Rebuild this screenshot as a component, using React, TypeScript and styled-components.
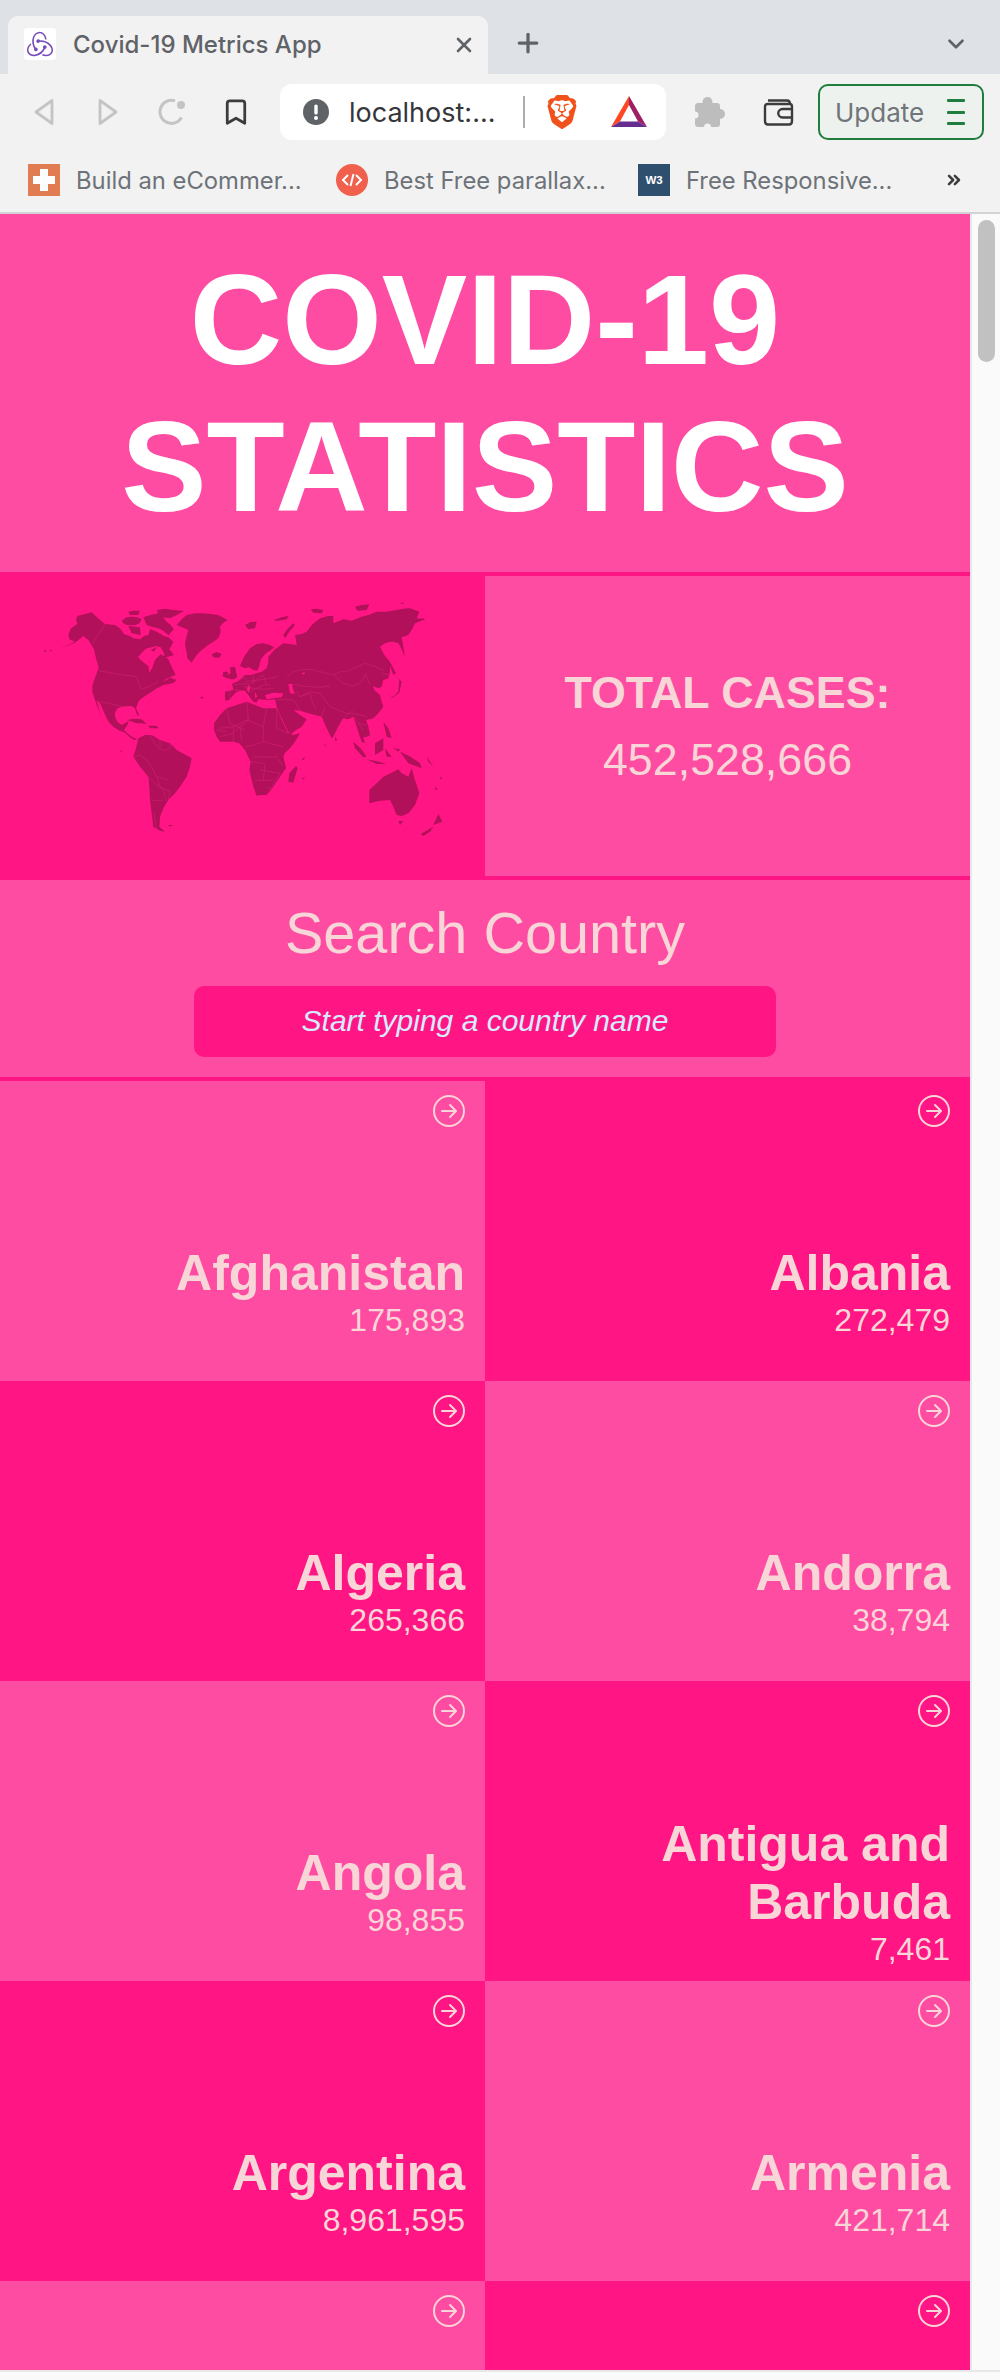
import React from 'react';
import styled, { createGlobalStyle } from 'styled-components';
import { BsArrowRightCircle } from 'react-icons/bs';
import { SiRedux, SiBrave } from 'react-icons/si';
import { Bookmark, X, Plus, ChevronDown, ChevronsRight } from 'lucide-react';

const LIGHT = '#ff4ca3';
const DARK = '#ff1583';
const INK = '#f8d5d6';
const SANS = '"Liberation Sans", Arial, sans-serif';
const UI = 'Inter, "Noto Sans", sans-serif';

const Global = createGlobalStyle`
  html, body { margin: 0; padding: 0; overflow: hidden; background: #fafafa; }
  * { box-sizing: border-box; }
`;

const Frame = styled.div`
  width: 1000px;
  height: 2380px;
  overflow: hidden;
  display: flex;
  flex-direction: column;
  background: #fafafa;
`;
const TabStrip = styled.div`
  height: 74px;
  background: #dee1e6;
  padding: 16px 0 0 8px;
  display: flex;
  align-items: stretch;
  color: #5f6368;
`;
const Tab = styled.div`
  width: 480px;
  background: #f2f2f2;
  border-radius: 10px 10px 0 0;
  display: flex;
  align-items: center;
  padding: 0 12px 0 16px;
`;
const Favicon = styled.span`
  width: 32px;
  height: 32px;
  background: #fff;
  border-radius: 3px;
  display: flex;
  align-items: center;
  justify-content: center;
  color: #764abc;
  margin-top: -2px;
`;
const TabTitle = styled.span`
  flex: 1;
  margin-left: 17px;
  font: 500 24px ${UI};
  color: #5f6368;
  margin-top: -2px;
`;
const NewTab = styled.span`
  display: flex;
  margin: -2px 0 0 25px;
  height: 58px;
  align-items: center;
`;
const StripEnd = styled.span`
  display: flex;
  margin: -2px 0 0 auto;
  padding-right: 31px;
  align-items: center;
`;
const Toolbar = styled.div`
  height: 72px;
  background: #f2f2f2;
  display: flex;
  align-items: flex-start;
  padding: 10px 0 0 12px;
`;
const NavButton = styled.span`
  width: 64px;
  height: 56px;
  display: flex;
  align-items: center;
  justify-content: center;
  color: #3c3c3c;
`;
const Address = styled.div`
  width: 386px;
  height: 56px;
  margin-left: 12px;
  margin-right: 10px;
  background: #fff;
  border-radius: 12px;
  display: flex;
  align-items: center;
  padding-left: 23px;
`;
const Host = styled.span`
  margin-left: 20px;
  font: 400 27px ${UI};
  color: #35363a;
  width: 174px;
  white-space: nowrap;
`;
const Divider = styled.span`
  width: 2px;
  height: 32px;
  background: #adadad;
`;
const Brave = styled.span`
  display: flex;
  margin-left: 20px;
  color: #f1511b;
`;
const Bat = styled.span`
  display: flex;
  margin-left: 32px;
`;
const ToolIcon = styled.span`
  width: 68px;
  height: 56px;
  display: flex;
  align-items: center;
  justify-content: center;
`;
const UpdateButton = styled.div`
  width: 166px;
  height: 56px;
  margin-left: 6px;
  border: 2px solid #1f7e3d;
  border-radius: 10px;
  background: #edf2ee;
  display: flex;
  align-items: center;
  justify-content: space-between;
  padding: 0 17px 0 15px;
  font: 400 26px ${UI};
  color: #70757a;
`;
const MenuLines = styled.span`
  width: 18px;
  height: 26px;
  display: flex;
  flex-direction: column;
  justify-content: space-between;
  & > i {
    display: block;
    height: 3px;
    background: #1f7e3d;
    border-radius: 1px;
  }
`;
const Bookmarks = styled.div`
  height: 68px;
  background: #f2f2f2;
  border-bottom: 2px solid #d2d3d5;
  display: flex;
  align-items: flex-start;
  padding: 18px 0 0 28px;
`;
const BookmarkItem = styled.div<{ $w: number }>`
  width: ${p => p.$w}px;
  height: 32px;
  display: flex;
  align-items: center;
  gap: 16px;
  font: 400 23.8px ${UI};
  color: #6d7378;
  white-space: nowrap;
`;
const Overflow = styled.span`
  display: flex;
  margin-left: 43px;
  height: 32px;
  align-items: center;
  color: #3c3c3c;
`;
const MarkIcon = styled.span<{ $bg: string; $round?: boolean }>`
  width: 32px;
  height: 32px;
  flex: none;
  background: ${p => p.$bg};
  border-radius: ${p => (p.$round ? '50%' : '0')};
  display: flex;
  align-items: center;
  justify-content: center;
  color: #fff;
  font: 700 11.5px ${SANS};
`;

const Viewport = styled.div`
  display: flex;
  height: 2158px;
  border-bottom: 2px solid #e8e8e8;
`;
const Page = styled.main`
  width: 970px;
  height: 2156px;
  overflow: hidden;
  background: ${DARK};
  font-family: ${SANS};
  color: ${INK};
`;
const Gutter = styled.div`
  width: 30px;
  border-left: 2px solid #e8e8e8;
  background: #fafafa;
  padding: 6px 0 0 6px;
`;
const Thumb = styled.div`
  width: 17px;
  height: 142px;
  border-radius: 9px;
  background: #c1c1c1;
`;
const Header = styled.header`
  background: ${LIGHT};
  border-bottom: 4px solid ${DARK};
  padding: 32px 60px;
`;
const Title = styled.h1`
  margin: 0;
  font: 700 128px/147px ${SANS};
  color: #fff;
  text-align: center;
`;
const Hero = styled.section`
  display: grid;
  grid-template-columns: 485px 485px;
  height: 304px;
  background: ${DARK};
`;
const MapBox = styled.div`
  display: flex;
  & > svg { display: block; width: 485px; height: 304px; }
`;
const Stats = styled.div`
  height: 300px;
  background: ${LIGHT};
  display: flex;
  flex-direction: column;
  align-items: center;
  justify-content: center;
  gap: 16px;
  font-size: 44.8px;
`;
const StatsLabel = styled.h2`
  margin: 0;
  font: 700 44.8px ${SANS};
`;
const StatsValue = styled.span``;
const Search = styled.section`
  background: ${LIGHT};
  border-bottom: 4px solid ${DARK};
  padding: 20px 0;
  display: flex;
  flex-direction: column;
  align-items: center;
  gap: 20px;
  height: 201px;
`;
const SearchTitle = styled.h2`
  margin: 0;
  font: 400 57.6px ${SANS};
`;
const SearchInput = styled.input`
  width: 582px;
  height: 71px;
  border: 0;
  border-radius: 10px;
  background: ${DARK};
  text-align: center;
  font: italic 400 30px ${SANS};
  color: #d5ebff;
  padding-bottom: 3px;
  &::placeholder { color: #d5ebff; opacity: 1; }
`;
const Grid = styled.section`
  display: grid;
  grid-template-columns: 485px 485px;
  grid-auto-rows: 300px;
`;
const Tile = styled.article<{ $dark: boolean }>`
  background: ${p => (p.$dark ? DARK : LIGHT)};
  display: grid;
  grid-template-rows: 120px 1fr;
  padding: 0 20px;
`;
const TileTop = styled.div`
  display: flex;
  justify-content: flex-end;
  padding-top: 14px;
  color: ${INK};
`;
const TileBody = styled.div`
  display: flex;
  flex-direction: column;
  justify-content: center;
  align-items: flex-end;
  text-align: right;
`;
const Name = styled.h3`
  margin: 0;
  font: 700 50px ${SANS};
`;
const Count = styled.span`
  font-size: 32px;
`;

const tiles: { name?: string; count?: string }[] = [
  { name: 'Afghanistan', count: '175,893' },
  { name: 'Albania', count: '272,479' },
  { name: 'Algeria', count: '265,366' },
  { name: 'Andorra', count: '38,794' },
  { name: 'Angola', count: '98,855' },
  { name: 'Antigua and Barbuda', count: '7,461' },
  { name: 'Argentina', count: '8,961,595' },
  { name: 'Armenia', count: '421,714' },
  {},
  {},
];

const LAND = [
  // North America
  'M130,272L138,271 140,275 132,275ZM146,272L155,270 155,274ZM160,270L180,264 205,255 225,245 208,238 205,225 213,205 232,192 228,178 232,168 275,157 300,180 315,192 345,195 360,205 372,222 390,228 400,235 420,238 432,228 445,225 458,232 470,238 478,222 492,228 505,232 520,245 514,258 508,268 522,285 505,290 495,292 490,275 482,262 468,258 455,262 440,265 428,275 414,292 428,305 445,318 448,340 458,320 465,300 474,290 482,283 497,290 505,298 515,320 527,345 512,350 500,356 490,362 510,360 530,358 522,368 505,372 490,375 478,382 470,385 455,395 440,405 425,415 415,425 408,445 415,458 417,470 410,462 405,445 395,438 385,438 368,440 352,445 345,458 345,470 352,485 365,495 375,490 387,482 382,495 372,510 385,522 395,530 412,538 402,540 388,530 375,518 355,510 340,500 328,488 320,475 310,452 300,430 290,420 296,445 303,465 292,440 285,420 277,395 277,378 284,355 290,340 296,322 288,295 282,268 265,240 250,228 238,238 225,248 200,258Z',
  // Arctic islands, Caribbean
  'M365,182L380,172 395,170 412,172 425,178 418,190 405,196 380,195 370,190ZM385,198L405,200 420,202 422,226 408,222 395,220ZM430,172L452,165 475,160 490,172 500,185 512,195 522,207 505,226 490,212 475,205 455,200 440,195ZM385,155L402,152 420,152 415,165 390,165ZM470,150L495,146 520,150 552,153 530,165 510,175 480,170ZM450,207L470,215 488,225 470,240 445,226ZM452,270L470,262 462,275ZM383,480L400,476 425,478 440,492 422,490 410,490ZM445,497L470,497 476,505 450,505ZM490,370L510,352 528,362 505,372ZM600,410L612,412 605,416ZM360,572L368,572 364,576Z',
  // Greenland
  'M530,195L545,178 560,165 585,160 610,160 632,162 655,165 683,180 668,190 660,200 662,215 655,235 640,245 625,255 605,270 590,285 575,308 562,295 560,280 555,250 560,228 565,210Z',
  'M635,283L650,276 665,282 660,290 655,294 640,292Z',
  // Polar islands
  'M735,195L752,186 770,185 765,205 745,208ZM822,180L845,172 865,168 860,178 830,183ZM932,148L950,146 970,150 965,160 940,158ZM1065,140L1085,135 1108,133 1100,150 1072,152ZM1200,128L1212,128 1208,133ZM1262,175L1275,176 1270,180Z',
  // British Isles
  'M690,322L705,320 708,335 712,350 703,358 695,358 672,352 692,340ZM670,335L685,335 682,350 668,350Z',
  // Scandinavia
  'M720,318L732,290 750,265 770,252 790,250 808,254 822,262 810,272 800,278 790,288 782,300 778,318 772,332 760,330 748,322 735,325Z',
  // Eurasia
  'M675,395L688,392 700,390 698,378 695,372 708,366 720,360 728,352 735,345 752,345 770,340 785,335 800,325 805,305 805,290 825,268 850,250 870,252 890,255 888,240 885,225 905,222 920,215 938,192 960,175 985,168 1000,168 1000,190 1030,178 1055,182 1080,172 1105,165 1130,155 1160,155 1190,150 1210,146 1230,145 1258,155 1250,175 1275,178 1245,190 1238,205 1225,225 1205,232 1210,260 1215,290 1205,268 1195,250 1182,246 1170,245 1155,250 1140,260 1150,280 1160,295 1170,310 1170,335 1165,355 1150,360 1145,380 1135,385 1118,378 1125,392 1140,405 1145,425 1150,440 1135,460 1120,475 1098,480 1105,500 1110,525 1098,532 1090,530 1095,550 1085,545 1075,515 1070,500 1060,470 1045,478 1030,475 1015,500 1000,530 995,535 980,505 965,470 945,465 925,460 900,452 880,450 900,465 920,478 905,500 885,512 870,525 855,495 840,465 830,440 825,418 800,420 775,418 770,428 760,425 752,415 745,405 735,392 722,392 710,395 700,405 690,418 680,422 675,420Z',
  // Africa
  'M642,490L660,465 680,445 710,435 740,425 765,435 790,445 810,445 830,445 845,480 865,520 880,525 900,520 885,545 870,565 855,578 850,590 858,625 840,650 820,680 808,695 800,705 785,705 770,707 760,680 748,630 752,605 735,570 718,550 700,545 680,545 660,545 650,530 642,510Z',
  'M888,618L893,625 885,650 880,668 865,665 868,640Z',
  'M905,598L915,590 912,600ZM905,655L917,652 910,658Z',
  // South America
  'M415,535L435,525 455,525 480,540 510,550 530,570 575,595 570,620 560,650 540,680 525,700 505,720 490,745 480,770 478,800 495,815 480,812 460,800 455,760 450,720 448,680 445,650 420,620 400,590 408,565Z',
  'M505,795L518,795 510,800Z',
  // Australia and NZ
  'M1108,690L1130,670 1150,650 1172,640 1195,628 1205,640 1225,650 1235,625 1245,660 1258,700 1245,735 1225,760 1205,768 1190,765 1180,740 1170,720 1140,722 1108,730ZM1195,783L1210,783 1200,795ZM1315,762L1327,785 1300,795ZM1262,822L1300,800 1290,815 1270,828Z',
  // SE Asia, Japan, islands
  'M1060,545L1082,565 1100,590 1090,592 1065,565ZM1125,550L1150,535 1150,570 1125,585ZM1100,598L1130,604 1160,612 1130,612ZM1200,575L1232,590 1260,610 1265,625 1225,610ZM1155,565L1175,590 1160,590ZM1150,485L1165,505 1175,535 1160,530ZM1168,415L1182,408 1195,395 1198,360 1185,345 1205,365 1198,398 1180,412ZM1160,290L1175,315 1188,340 1180,345ZM1005,530L1012,540 1005,543ZM855,235L870,212 885,195 880,190 862,208 850,225ZM1180,565L1200,568 1195,575ZM1280,590L1300,620 1285,605ZM1305,680L1315,690 1305,688ZM975,548L978,560 974,558ZM1320,650L1328,655 1322,658Z',
];
const WATER =
  'M795,405L820,398 850,400 845,412 820,415 800,418ZM865,372L878,372 878,385 885,402 870,400ZM905,340L915,335 912,345ZM745,375L752,382 746,398 740,388ZM765,395L772,410 765,415Z';
const BORDERS =
  'M315,192L278,250M296,332L350,342 410,350 425,388 450,378 475,365M300,425L325,430 345,435 375,440M860,352L880,335 900,330 930,328 960,335 1000,345 1020,335 1040,335 1095,310 1125,320 1150,330M1000,345L1030,370 1060,378 1085,365 1100,340M880,372L905,378 930,380 960,382 990,378M900,410L930,395 960,400 975,420 990,440 1015,450 1040,460 1070,462 1100,470M930,400L938,430 950,450M890,395L900,410 930,400M830,420L855,418 880,420 900,450M965,470L975,440M1000,530L1025,480 1030,475M1060,470L1075,490 1090,510M1030,475L1060,450M1075,490L1100,495M700,375L720,372 750,372 790,345M735,365L780,360 835,350M730,380L760,385 790,388 820,385M750,395L770,385 790,375 810,375M720,345L740,358M790,345L800,375M760,345L760,372M700,390L730,392M690,392L690,418M660,505L700,500 740,480 765,490 790,500 800,445M740,425L745,480 720,500 700,520 660,530M680,445L690,490 735,510M790,500L790,545 760,555 735,560M790,545L815,552 850,560M830,445L830,505 865,520M700,500L700,545M720,500L725,545M650,510L680,515M760,590L795,592 830,590 850,620M752,605L790,610M780,630L810,635 840,640 825,665 810,690M765,660L795,662 820,660M795,610L790,660M800,680L812,688M450,525L460,545 470,560 490,572 510,565M480,540L480,562M510,550L510,565M405,590L420,585 440,600 455,620 470,650 505,660M445,650L465,670 490,690 500,725M455,720L475,722 490,720M470,650L480,680 510,695 505,720M462,760L470,810M1145,340L1170,345M1120,478L1105,480M1095,345L1110,372';

const WorldMap = () => (
  <svg viewBox="0 48 1455 912" role="img" aria-label="World map">
    <g fill="#b2105b">
      {LAND.map((d, i) => (
        <path key={i} d={d} />
      ))}
    </g>
    <path d={WATER} fill={DARK} />
    <path d={BORDERS} fill="none" stroke="#d52674" strokeWidth="1.500" />
  </svg>
);

const BackIcon = ({ flip }: { flip?: boolean }) => (
  <svg width="20" height="28" viewBox="0 0 20 28" style={flip ? { transform: 'scaleX(-1)' } : undefined}>
    <path d="M18 2.500V25.500L2 14Z" fill="none" stroke="#c4c4c4" strokeWidth="2.800" strokeLinejoin="round" />
  </svg>
);
const ReloadIcon = () => (
  <svg width="28" height="28" viewBox="0 0 28 28">
    <path d="M23.500 19.500A11.500 11.500 0 1 1 17 2.900" fill="none" stroke="#c4c4c4" strokeWidth="3" />
    <circle cx="23" cy="7" r="4" fill="#c4c4c4" />
  </svg>
);
const AlertIcon = () => (
  <svg width="26" height="26" viewBox="0 0 26 26">
    <circle cx="13" cy="13" r="13" fill="#5f6368" />
    <rect x="11.300" y="5.500" width="3.400" height="10" rx="1.500" fill="#fff" />
    <circle cx="13" cy="19" r="2" fill="#fff" />
  </svg>
);
const BatIcon = () => (
  <svg width="36" height="33" viewBox="0 0 36 33">
    <path d="M18 0L0 31L9 25.500L18 9Z" fill="#ff4724" />
    <path d="M18 0V9L27 25.500L36 31Z" fill="#9e1f63" />
    <path d="M0 31L9 25.500H27L36 31Z" fill="#662d91" />
  </svg>
);
const PuzzleIcon = () => (
  <svg width="30" height="30" viewBox="0 0 30 30">
    <g fill="#bdbdbd">
      <rect x="0" y="6" width="25" height="24" rx="3" />
      <circle cx="12.500" cy="5" r="5" />
      <circle cx="25" cy="17" r="5" />
    </g>
    <circle cx="0" cy="18" r="3.500" fill="#f2f2f2" />
    <circle cx="12.500" cy="30" r="3.500" fill="#f2f2f2" />
  </svg>
);
const WalletIcon = () => (
  <svg width="31" height="27" viewBox="0 0 31 27">
    <path
      d="M5 1.500H24Q27 1.500 27 5H5Q2 5 2 8V22Q2 25.500 5 25.500H26Q29 25.500 29 22V8Q29 5 27 5M29 10H19.500A4 4 0 0 0 19.500 18.500H29"
      fill="none"
      stroke="#3c3c3c"
      strokeWidth="2.400"
    />
  </svg>
);
const CodeMark = () => (
  <svg width="22" height="16" viewBox="0 0 22 16">
    <path d="M7 3L2 8L7 13M15 3L20 8L15 13M12.500 2L9.500 14" fill="none" stroke="#fff" strokeWidth="2" />
  </svg>
);
const PlusMark = () => (
  <svg width="22" height="22" viewBox="0 0 22 22">
    <path d="M7 0H15V7H22V15H15V22H7V15H0V7H7Z" fill="#fff" />
  </svg>
);

export default function App() {
  return (
    <Frame>
      <Global />
      <TabStrip>
        <Tab>
          <Favicon>
            <SiRedux size={26} />
          </Favicon>
          <TabTitle>Covid-19 Metrics App</TabTitle>
          <X size={24} strokeWidth={2.6} color="#5f6368" />
        </Tab>
        <NewTab>
          <Plus size={30} strokeWidth={2.6} color="#5f6368" />
        </NewTab>
        <StripEnd>
          <ChevronDown size={26} strokeWidth={2.4} color="#5f6368" />
        </StripEnd>
      </TabStrip>
      <Toolbar>
        <NavButton>
          <BackIcon />
        </NavButton>
        <NavButton>
          <BackIcon flip />
        </NavButton>
        <NavButton>
          <ReloadIcon />
        </NavButton>
        <NavButton>
          <Bookmark size={30} strokeWidth={2.2} />
        </NavButton>
        <Address>
          <AlertIcon />
          <Host>localhost:...</Host>
          <Divider />
          <Brave>
            <SiBrave size={34} />
          </Brave>
          <Bat>
            <BatIcon />
          </Bat>
        </Address>
        <ToolIcon>
          <PuzzleIcon />
        </ToolIcon>
        <ToolIcon>
          <WalletIcon />
        </ToolIcon>
        <UpdateButton>
          Update
          <MenuLines>
            <i />
            <i />
            <i />
          </MenuLines>
        </UpdateButton>
      </Toolbar>
      <Bookmarks>
        <BookmarkItem $w={308}>
          <MarkIcon $bg="#e07b52">
            <PlusMark />
          </MarkIcon>
          Build an eCommer...
        </BookmarkItem>
        <BookmarkItem $w={302}>
          <MarkIcon $bg="#f0604d" $round>
            <CodeMark />
          </MarkIcon>
          Best Free parallax...
        </BookmarkItem>
        <BookmarkItem $w={263}>
          <MarkIcon $bg="#2f4f6f">W3</MarkIcon>
          Free Responsive...
        </BookmarkItem>
        <Overflow>
          <ChevronsRight size={20} strokeWidth={3} />
        </Overflow>
      </Bookmarks>
      <Viewport>
        <Page>
          <Header>
            <Title>COVID-19 STATISTICS</Title>
          </Header>
          <Hero>
            <MapBox>
              <WorldMap />
            </MapBox>
            <Stats>
              <StatsLabel>TOTAL CASES:</StatsLabel>
              <StatsValue>452,528,666</StatsValue>
            </Stats>
          </Hero>
          <Search>
            <SearchTitle>Search Country</SearchTitle>
            <SearchInput placeholder="Start typing a country name" />
          </Search>
          <Grid>
            {tiles.map((t, i) => (
              <Tile key={i} $dark={(Math.floor(i / 2) + i) % 2 === 1}>
                <TileTop>
                  <BsArrowRightCircle size={32} />
                </TileTop>
                <TileBody>
                  {t.name && <Name>{t.name}</Name>}
                  {t.count && <Count>{t.count}</Count>}
                </TileBody>
              </Tile>
            ))}
          </Grid>
        </Page>
        <Gutter>
          <Thumb />
        </Gutter>
      </Viewport>
    </Frame>
  );
}
